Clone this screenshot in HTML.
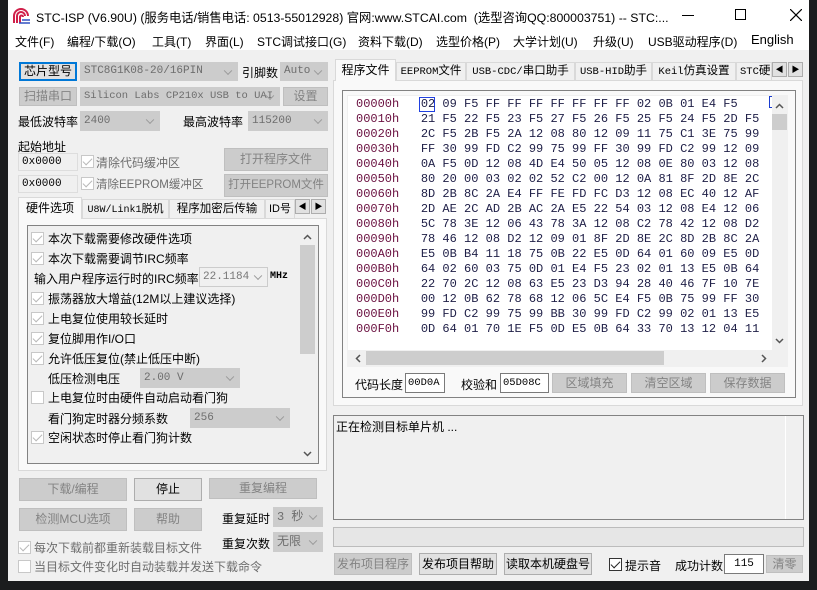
<!DOCTYPE html>
<html><head><meta charset="utf-8"><style>
*{box-sizing:border-box;margin:0;padding:0}
body{width:817px;height:590px;background:#1b1c1e;position:relative;overflow:hidden;font-family:"Liberation Sans","Noto Sans CJK SC",sans-serif;font-size:12px;color:#000}
.a{position:absolute;white-space:nowrap}
.win{position:absolute;left:8px;top:0;width:801px;height:581px;background:#f0f0f0}
.btn{position:absolute;background:#e1e1e1;border:1px solid #adadad;text-align:center;font-size:12px;white-space:nowrap;overflow:hidden}
.dis{background:#cccccc;border-color:#bfbfbf;color:#838383}
.cmb{position:absolute;background:#cccccc;border:1px solid #cccccc;color:#6d6d6d;font-family:"Liberation Mono","Noto Sans CJK SC",monospace;font-size:11px;padding-left:3px;white-space:nowrap;overflow:hidden}
.cmb:after{content:"";position:absolute;right:6px;top:50%;width:5px;height:5px;border-right:1px solid #999;border-bottom:1px solid #999;transform:translateY(-70%) rotate(45deg)}
.inp{position:absolute;background:#fff;border:1px solid #7a7a7a;font-family:"Liberation Mono",monospace;font-size:11px;padding-left:3px;white-space:nowrap}
.cb{position:absolute;width:13px;height:13px;border:1px solid #c8c8c8;background:#fff}
.cb.c:after{content:"";position:absolute;left:3px;top:0px;width:4px;height:8px;border-right:1.5px solid #b8b8b8;border-bottom:1.5px solid #b8b8b8;transform:rotate(45deg)}
.cb.k{border-color:#333}.cb.k:after{border-color:#222}
.tab{position:absolute;border:1px solid #d9d9d9;border-bottom:none;background:#f0f0f0;font-size:12px;text-align:center;white-space:nowrap;overflow:hidden}
.mono{font-family:"Liberation Mono","Noto Sans CJK SC",monospace}
.hex{position:absolute;left:356px;font-family:"Liberation Mono",monospace;font-size:12px;line-height:15px;white-space:pre;color:#202048}
.hex b{font-weight:normal;color:#6a1040}
.m{position:absolute;top:33px;font-size:12px;white-space:nowrap}
.l{position:absolute;white-space:nowrap;font-size:12px}
</style></head><body>
<div class="win"></div>
<!-- title -->
<div class="a" style="left:8px;top:0;width:801px;height:50px;background:#fff"></div>
<svg class="a" style="left:13px;top:8px" width="18" height="16" viewBox="0 0 18 16"><path d="M1 15 V8 A7 7 0 0 1 15 8 M4 15 V8 A4 4 0 0 1 12 8 M7 15 V9 A1.5 1.5 0 0 1 10 9" stroke="#d0204a" stroke-width="2" fill="none"/><path d="M6 15 H17 M9 12 H17" stroke="#3050c0" stroke-width="1.5"/></svg>
<div class="a" style="left:36px;top:8px;font-size:12.3px">STC-ISP (V6.90U) (服务电话/销售电话: 0513-55012928) 官网:www.STCAI.com&nbsp; (选型咨询QQ:800003751) -- STC:...</div>
<div class="a" style="left:682px;top:15px;width:12px;height:1px;background:#000"></div>
<div class="a" style="left:735px;top:9px;width:11px;height:11px;border:1px solid #000"></div>
<svg class="a" style="left:790px;top:9px" width="12" height="12"><path d="M0 0L12 12M12 0L0 12" stroke="#000" stroke-width="1.2"/></svg>
<div class="m" style="left:15px">文件(F)</div>
<div class="m" style="left:67px">编程/下载(O)</div>
<div class="m" style="left:152px">工具(T)</div>
<div class="m" style="left:205px">界面(L)</div>
<div class="m" style="left:257px">STC调试接口(G)</div>
<div class="m" style="left:358px">资料下载(D)</div>
<div class="m" style="left:436px">选型价格(P)</div>
<div class="m" style="left:513px">大学计划(U)</div>
<div class="m" style="left:593px">升级(U)</div>
<div class="m" style="left:648px">USB驱动程序(D)</div>
<div class="m" style="left:751px;font-size:13px;top:32px">English</div>

<!-- left top -->
<div class="btn" style="left:19px;top:62px;width:58px;height:19px;border:2px solid #0078d7;line-height:15px">芯片型号</div>
<div class="cmb" style="left:80px;top:62px;width:158px;height:19px;line-height:17px">STC8G1K08-20/16PIN</div>
<div class="l" style="left:242px;top:64px">引脚数</div>
<div class="cmb" style="left:280px;top:62px;width:48px;height:19px;line-height:17px">Auto</div>
<div class="btn dis" style="left:19px;top:87px;width:58px;height:19px;line-height:17px">扫描串口</div>
<div class="cmb" style="left:80px;top:87px;width:200px;height:19px;line-height:17px;font-size:10.5px">Silicon Labs CP210x USB to UAI</div>
<div class="btn dis" style="left:283px;top:87px;width:45px;height:19px;line-height:17px">设置</div>
<div class="l" style="left:18px;top:113px">最低波特率</div>
<div class="cmb" style="left:80px;top:111px;width:80px;height:20px;line-height:18px">2400</div>
<div class="l" style="left:183px;top:113px">最高波特率</div>
<div class="cmb" style="left:248px;top:111px;width:80px;height:20px;line-height:18px">115200</div>
<div class="l" style="left:18px;top:138px">起始地址</div>
<div class="inp" style="left:18px;top:153px;width:60px;height:18px;border-color:#ddd;background:#f0f0f0;line-height:16px">0x0000</div>
<div class="cb c" style="left:81px;top:155px"></div>
<div class="l" style="left:96px;top:154px;color:#6d6d6d">清除代码缓冲区</div>
<div class="btn dis" style="left:224px;top:148px;width:104px;height:23px;line-height:21px">打开程序文件</div>
<div class="inp" style="left:18px;top:175px;width:60px;height:18px;border-color:#ddd;background:#f0f0f0;line-height:16px">0x0000</div>
<div class="cb c" style="left:81px;top:177px"></div>
<div class="l" style="left:96px;top:176px;color:#6d6d6d;font-size:11.5px">清除EEPROM缓冲区</div>
<div class="btn dis" style="left:224px;top:174px;width:104px;height:23px;line-height:21px;font-size:11.5px">打开EEPROM文件</div>

<!-- left tabs -->
<div class="a" style="left:18px;top:218px;width:309px;height:253px;border:1px solid #d9d9d9;background:#f9f9f9"></div>
<div class="tab" style="left:18px;top:197px;width:64px;height:22px;line-height:20px;background:#f9f9f9">硬件选项</div>
<div class="tab" style="left:82px;top:199px;width:87px;height:19px;line-height:18px;font-size:11px"><span class="mono" style="font-size:10px">U8W/Link1</span>脱机</div>
<div class="tab" style="left:169px;top:199px;width:96px;height:19px;line-height:18px;font-size:11.5px">程序加密后传输</div>
<div class="tab" style="left:265px;top:199px;width:30px;height:19px;line-height:18px;text-align:left;padding-left:3px;font-size:11px">ID号</div>
<div class="btn" style="left:295px;top:199px;width:15px;height:15px;font-size:8px;line-height:13px">◀</div>
<div class="btn" style="left:311px;top:199px;width:15px;height:15px;font-size:8px;line-height:13px">▶</div>
<div class="a" style="left:27px;top:225px;width:292px;height:239px;border:1px solid #828282;background:#f0f0f0"></div>
<div class="a" style="left:299px;top:226px;width:17px;height:237px;background:#f0f0f0"></div>
<div class="a" style="left:300px;top:245px;width:15px;height:109px;background:#cdcdcd"></div>
<svg class="a" style="left:303px;top:234px" width="9" height="6"><path d="M1 5L4.5 1.5L8 5" stroke="#555" fill="none" stroke-width="1.5"/></svg>
<svg class="a" style="left:303px;top:451px" width="9" height="6"><path d="M1 1L4.5 4.5L8 1" stroke="#555" fill="none" stroke-width="1.5"/></svg>
<div class="cb c" style="left:31px;top:232px"></div><div class="l" style="left:48px;top:230px">本次下载需要修改硬件选项</div>
<div class="cb c" style="left:31px;top:252px"></div><div class="l" style="left:48px;top:250px">本次下载需要调节IRC频率</div>
<div class="l" style="left:34px;top:270px">输入用户程序运行时的IRC频率</div>
<div class="cmb" style="left:199px;top:267px;width:69px;height:20px;background:#f0f0f0;border-color:#ccc;line-height:18px;color:#777">22.1184</div>
<div class="a mono" style="left:270px;top:271px;font-size:10px;font-weight:bold">MHz</div>
<div class="cb c" style="left:31px;top:292px"></div><div class="l" style="left:48px;top:290px">振荡器放大增益(12M以上建议选择)</div>
<div class="cb c" style="left:31px;top:312px"></div><div class="l" style="left:48px;top:310px">上电复位使用较长延时</div>
<div class="cb c" style="left:31px;top:332px"></div><div class="l" style="left:48px;top:330px">复位脚用作I/O口</div>
<div class="cb c" style="left:31px;top:352px"></div><div class="l" style="left:48px;top:350px">允许低压复位(禁止低压中断)</div>
<div class="l" style="left:48px;top:370px">低压检测电压</div>
<div class="cmb" style="left:140px;top:368px;width:100px;height:20px;line-height:18px">2.00 V</div>
<div class="cb" style="left:31px;top:391px"></div><div class="l" style="left:48px;top:389px">上电复位时由硬件自动启动看门狗</div>
<div class="l" style="left:48px;top:410px">看门狗定时器分频系数</div>
<div class="cmb" style="left:190px;top:408px;width:100px;height:20px;line-height:18px">256</div>
<div class="cb c" style="left:31px;top:431px"></div><div class="l" style="left:48px;top:429px">空闲状态时停止看门狗计数</div>

<div class="btn dis" style="left:19px;top:478px;width:108px;height:23px;line-height:21px">下载/编程</div>
<div class="btn" style="left:134px;top:478px;width:68px;height:23px;line-height:21px">停止</div>
<div class="btn dis" style="left:209px;top:478px;width:108px;height:21px;line-height:19px">重复编程</div>
<div class="btn dis" style="left:19px;top:508px;width:108px;height:23px;line-height:21px">检测MCU选项</div>
<div class="btn dis" style="left:134px;top:508px;width:68px;height:23px;line-height:21px">帮助</div>
<div class="l" style="left:222px;top:510px">重复延时</div>
<div class="cmb" style="left:273px;top:507px;width:50px;height:20px;line-height:18px;font-size:12px">3 秒</div>
<div class="l" style="left:222px;top:535px">重复次数</div>
<div class="cmb" style="left:273px;top:532px;width:50px;height:20px;line-height:18px;font-size:12px">无限</div>
<div class="cb c" style="left:18px;top:541px"></div><div class="l" style="left:34px;top:539px;color:#6d6d6d">每次下载前都重新装载目标文件</div>
<div class="cb" style="left:18px;top:560px"></div><div class="l" style="left:34px;top:558px;color:#6d6d6d">当目标文件变化时自动装载并发送下载命令</div>

<!-- right tabs -->
<div class="a" style="left:333px;top:80px;width:470px;height:326px;border:1px solid #d9d9d9;background:#f9f9f9"></div>
<div class="tab" style="left:335px;top:59px;width:61px;height:22px;line-height:20px;background:#f9f9f9">程序文件</div>
<div class="tab" style="left:396px;top:62px;width:70px;height:18px;line-height:17px;font-size:11.5px"><span class="mono" style="font-size:10.5px">EEPROM</span>文件</div>
<div class="tab" style="left:466px;top:62px;width:109px;height:18px;line-height:17px;font-size:11.5px"><span class="mono" style="font-size:10.5px">USB-CDC/</span>串口助手</div>
<div class="tab" style="left:575px;top:62px;width:77px;height:18px;line-height:17px;font-size:11.5px"><span class="mono" style="font-size:10.5px">USB-HID</span>助手</div>
<div class="tab" style="left:652px;top:62px;width:84px;height:18px;line-height:17px;font-size:11.5px"><span class="mono" style="font-size:10.5px">Keil</span>仿真设置</div>
<div class="tab" style="left:736px;top:62px;width:36px;height:18px;line-height:17px;text-align:left;padding-left:3px;font-size:11.5px"><span class="mono" style="font-size:10.5px">STC</span>硬</div>
<div class="btn" style="left:772px;top:62px;width:15px;height:15px;font-size:8px;line-height:13px">◀</div>
<div class="btn" style="left:788px;top:62px;width:15px;height:15px;font-size:8px;line-height:13px">▶</div>
<div class="a" style="left:342px;top:90px;width:454px;height:308px;border:1px solid #828282"></div>
<div class="a" style="left:347px;top:95px;width:441px;height:272px;background:#f0f0f0"></div>
<div class="a" style="left:348px;top:96px;width:424px;height:254px;background:#fff"></div>
<div class="a" style="left:772px;top:96px;width:16px;height:254px;background:#f0f0f0"></div>
<div class="a" style="left:772px;top:114px;width:15px;height:16px;background:#cdcdcd"></div>
<div class="a" style="left:769px;top:96px;width:3px;height:12px;border:1px solid #1a3cd0;border-right:none"></div>
<svg class="a" style="left:775px;top:103px" width="9" height="6"><path d="M1 5L4.5 1.5L8 5" stroke="#555" fill="none" stroke-width="1.5"/></svg>
<svg class="a" style="left:775px;top:338px" width="9" height="6"><path d="M1 1L4.5 4.5L8 1" stroke="#555" fill="none" stroke-width="1.5"/></svg>
<div class="a" style="left:366px;top:351px;width:298px;height:14px;background:#cdcdcd"></div>
<svg class="a" style="left:355px;top:354px" width="6" height="9"><path d="M5 1L1.5 4.5L5 8" stroke="#555" fill="none" stroke-width="1.5"/></svg>
<svg class="a" style="left:761px;top:354px" width="6" height="9"><path d="M1 1L4.5 4.5L1 8" stroke="#555" fill="none" stroke-width="1.5"/></svg>
<div class="a" style="left:419px;top:97px;width:16px;height:15px;border:1px solid #2040e0"></div>
<div class="hex" style="top:97px"><b>00000h</b>   02 09 F5 FF FF FF FF FF FF FF 02 0B 01 E4 F5
<b>00010h</b>   21 F5 22 F5 23 F5 27 F5 26 F5 25 F5 24 F5 2D F5
<b>00020h</b>   2C F5 2B F5 2A 12 08 80 12 09 11 75 C1 3E 75 99
<b>00030h</b>   FF 30 99 FD C2 99 75 99 FF 30 99 FD C2 99 12 09
<b>00040h</b>   0A F5 0D 12 08 4D E4 50 05 12 08 0E 80 03 12 08
<b>00050h</b>   80 20 00 03 02 02 52 C2 00 12 0A 81 8F 2D 8E 2C
<b>00060h</b>   8D 2B 8C 2A E4 FF FE FD FC D3 12 08 EC 40 12 AF
<b>00070h</b>   2D AE 2C AD 2B AC 2A E5 22 54 03 12 08 E4 12 06
<b>00080h</b>   5C 78 3E 12 06 43 78 3A 12 08 C2 78 42 12 08 D2
<b>00090h</b>   78 46 12 08 D2 12 09 01 8F 2D 8E 2C 8D 2B 8C 2A
<b>000A0h</b>   E5 0B B4 11 18 75 0B 22 E5 0D 64 01 60 09 E5 0D
<b>000B0h</b>   64 02 60 03 75 0D 01 E4 F5 23 02 01 13 E5 0B 64
<b>000C0h</b>   22 70 2C 12 08 63 E5 23 D3 94 28 40 46 7F 10 7E
<b>000D0h</b>   00 12 0B 62 78 68 12 06 5C E4 F5 0B 75 99 FF 30
<b>000E0h</b>   99 FD C2 99 75 99 BB 30 99 FD C2 99 02 01 13 E5
<b>000F0h</b>   0D 64 01 70 1E F5 0D E5 0B 64 33 70 13 12 04 11</div>
<div class="l" style="left:355px;top:376px">代码长度</div>
<div class="inp" style="left:405px;top:373px;width:40px;height:20px;line-height:18px;font-size:10.5px;padding-left:2px">00D0A</div>
<div class="l" style="left:461px;top:376px">校验和</div>
<div class="inp" style="left:500px;top:373px;width:49px;height:20px;line-height:18px;font-size:10.5px;padding-left:2px">05D08C</div>
<div class="btn dis" style="left:552px;top:373px;width:75px;height:20px;line-height:18px">区域填充</div>
<div class="btn dis" style="left:631px;top:373px;width:75px;height:20px;line-height:18px">清空区域</div>
<div class="btn dis" style="left:710px;top:373px;width:75px;height:20px;line-height:18px">保存数据</div>

<div class="a" style="left:333px;top:415px;width:471px;height:105px;border:1px solid #828282;background:#f0f0f0"></div>
<div class="a" style="left:785px;top:416px;width:1px;height:103px;background:#fff"></div>
<div class="l" style="left:336px;top:418px">正在检测目标单片机 ...</div>
<div class="a" style="left:333px;top:527px;width:471px;height:20px;border:1px solid #bcbcbc;background:#e6e6e6"></div>
<div class="btn dis" style="left:334px;top:553px;width:78px;height:22px;line-height:20px">发布项目程序</div>
<div class="btn" style="left:419px;top:553px;width:78px;height:22px;line-height:20px">发布项目帮助</div>
<div class="btn" style="left:504px;top:553px;width:88px;height:22px;line-height:20px">读取本机硬盘号</div>
<div class="cb c k" style="left:609px;top:558px"></div>
<div class="l" style="left:625px;top:557px">提示音</div>
<div class="l" style="left:675px;top:557px">成功计数</div>
<div class="inp" style="left:724px;top:554px;width:40px;height:20px;line-height:18px;text-align:center;padding:0">115</div>
<div class="btn dis" style="left:766px;top:555px;width:37px;height:18px;line-height:16px">清零</div>
</body></html>
